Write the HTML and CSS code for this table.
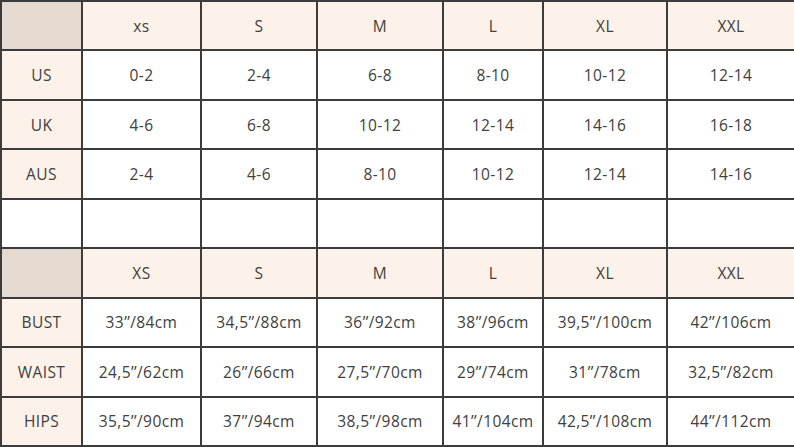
FILE: index.html
```html
<!DOCTYPE html>
<html>
<head>
<meta charset="utf-8">
<link rel="stylesheet" href="styles.css">
</head>
<body>
<table class="chart">
  <colgroup>
    <col class="c0"><col class="c1"><col class="c2"><col class="c3"><col class="c4"><col class="c5"><col class="c6">
  </colgroup>
  <tr class="head">
    <td class="corner"></td><td>xs</td><td>S</td><td>M</td><td>L</td><td>XL</td><td>XXL</td>
  </tr>
  <tr>
    <td class="label">US</td><td>0-2</td><td>2-4</td><td>6-8</td><td>8-10</td><td>10-12</td><td>12-14</td>
  </tr>
  <tr>
    <td class="label">UK</td><td>4-6</td><td>6-8</td><td>10-12</td><td>12-14</td><td>14-16</td><td>16-18</td>
  </tr>
  <tr>
    <td class="label">AUS</td><td>2-4</td><td>4-6</td><td>8-10</td><td>10-12</td><td>12-14</td><td>14-16</td>
  </tr>
  <tr class="blank">
    <td></td><td></td><td></td><td></td><td></td><td></td><td></td>
  </tr>
  <tr class="head">
    <td class="corner"></td><td>XS</td><td>S</td><td>M</td><td>L</td><td>XL</td><td>XXL</td>
  </tr>
  <tr>
    <td class="label">BUST</td><td>33’’/84cm</td><td>34,5’’/88cm</td><td>36’’/92cm</td><td>38’’/96cm</td><td>39,5’’/100cm</td><td>42’’/106cm</td>
  </tr>
  <tr>
    <td class="label">WAIST</td><td>24,5’’/62cm</td><td>26’’/66cm</td><td>27,5’’/70cm</td><td>29’’/74cm</td><td>31’’/78cm</td><td>32,5’’/82cm</td>
  </tr>
  <tr>
    <td class="label">HIPS</td><td>35,5’’/90cm</td><td>37’’/94cm</td><td>38,5’’/98cm</td><td>41’’/104cm</td><td>42,5’’/108cm</td><td>44’’/112cm</td>
  </tr>
</table>
</body>
</html>
```
FILE: styles.css
```css
html, body {
  margin: 0;
  padding: 0;
  background: #ffffff;
}
.chart {
  width: 794px;
  height: 447px;
  border-collapse: collapse;
  table-layout: fixed;
  font-family: "Open Sans", "Lato", sans-serif;
  font-size: 15.5px;
  letter-spacing: 0.4px;
  color: #404040;
}
.c0 { width: 81px; }
.c1 { width: 119px; }
.c2 { width: 116px; }
.c3 { width: 126px; }
.c4 { width: 100px; }
.c5 { width: 124px; }
.c6 { width: 128px; }
.chart td {
  border: 2px solid #3c3c3c;
  text-align: center;
  vertical-align: middle;
  height: 46px;
  padding: 0;
  background: #ffffff;
}
.chart .head td {
  background: #fdf2ea;
}
.chart .head td.corner {
  background: #e6dad0;
}
.chart td.label {
  background: #fdf2ea;
}
```
